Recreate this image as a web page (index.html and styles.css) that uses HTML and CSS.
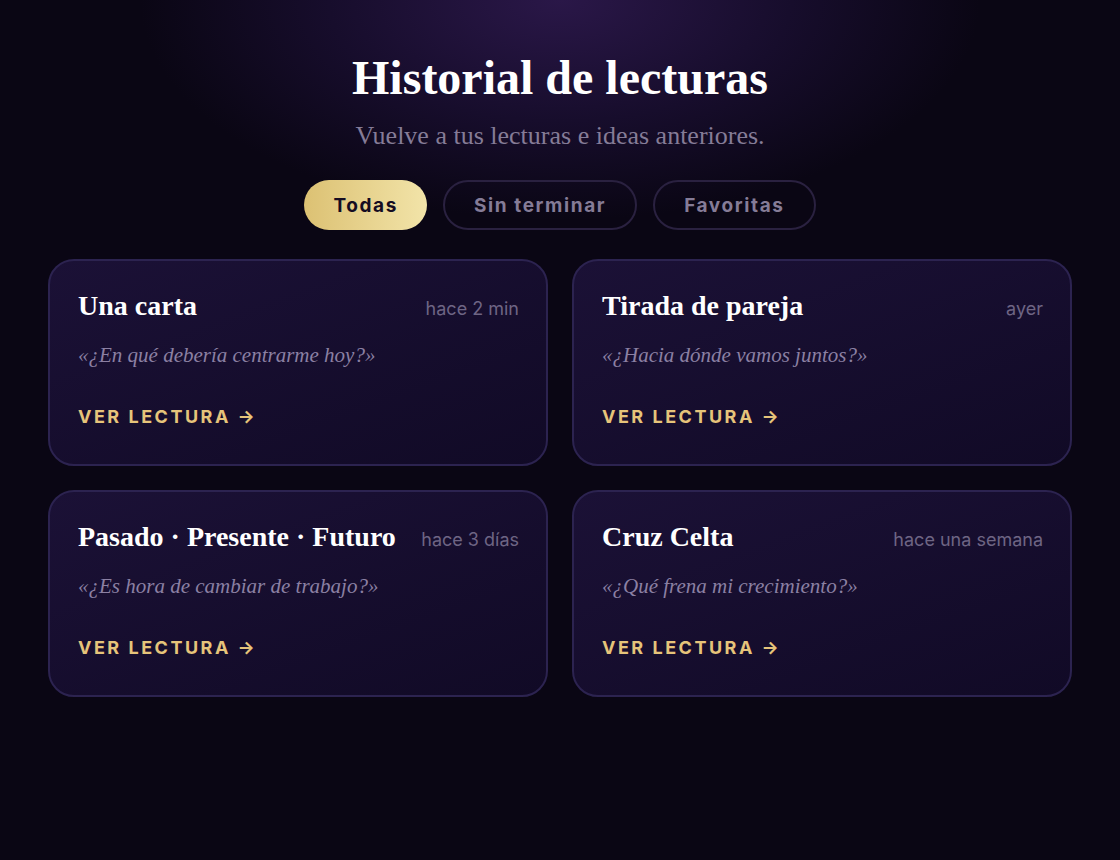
FILE: index.html
```html
<!DOCTYPE html>
<html lang="es">
<head>
    <meta charset="UTF-8">
    <title>Historial de lecturas</title>
    <link rel="stylesheet" href="styles.css">
</head>
<body>
    <main class="page">
        <header class="page-head">
            <h1>Historial de lecturas</h1>
            <p class="subtitle">Vuelve a tus lecturas e ideas anteriores.</p>
        </header>

        <nav class="filters">
            <div class="pill active">Todas</div>
            <div class="pill">Sin terminar</div>
            <div class="pill">Favoritas</div>
        </nav>

        <!-- lecturas -->
        <section class="grid">
            <article class="card">
                <div class="card-top">
                    <h2>Una carta</h2>
                    <span class="when">hace 2 min</span>
                </div>
                <p class="question">«¿En qué debería centrarme hoy?»</p>
                <a class="more" href="#">Ver lectura →</a>
            </article>
            <article class="card">
                <div class="card-top">
                    <h2>Tirada de pareja</h2>
                    <span class="when">ayer</span>
                </div>
                <p class="question">«¿Hacia dónde vamos juntos?»</p>
                <a class="more" href="#">Ver lectura →</a>
            </article>
            <article class="card">
                <div class="card-top">
                    <h2>Pasado · Presente · Futuro</h2>
                    <span class="when">hace 3 días</span>
                </div>
                <p class="question">«¿Es hora de cambiar de trabajo?»</p>
                <a class="more" href="#">Ver lectura →</a>
            </article>
            <article class="card">
                <div class="card-top">
                    <h2>Cruz Celta</h2>
                    <span class="when">hace una semana</span>
                </div>
                <p class="question">«¿Qué frena mi crecimiento?»</p>
                <a class="more" href="#">Ver lectura →</a>
            </article>
        </section>
    </main>
</body>
</html>
```

FILE: styles.css
```css
html, body {
    height: 100%;
}
body {
    margin: 0;
    padding: 0;
    font-family: 'Liberation Serif', serif;
    color: white;
    background-color: #0a0614;
    background-image: radial-gradient(ellipse 420px 220px at 560px 0, #2a1748 0%, #170d2c 55%, #0a0614 100%);
    background-repeat: no-repeat;
}
.page {
    width: 1024px;
    margin: 0 auto;
    padding-top: 50px;
}
.page-head {
    text-align: center;
}
h1 {
    margin: 0;
    font-size: 48px;
    font-weight: bold;
    line-height: 56px;
}
.subtitle {
    margin: 15px 0 0;
    font-size: 26px;
    line-height: 30px;
    color: #857c97;
}
.filters {
    display: flex;
    justify-content: center;
    gap: 16px;
    margin-top: 29px;
}
.pill {
    height: 50px;
    box-sizing: border-box;
    padding: 0 29px;
    display: flex;
    align-items: center;
    border: 2px solid #2a2140;
    border-radius: 25px;
    font-family: 'Inter', 'Liberation Sans', sans-serif;
    font-size: 19px;
    font-weight: 700;
    letter-spacing: 1.6px;
    color: #857c97;
}
.pill.active {
    border: none;
    padding: 0 29px;
    color: #150c22;
    background: linear-gradient(90deg, #dcc173, #f2e4a9);
}
.grid {
    display: grid;
    grid-template-columns: 1fr 1fr;
    gap: 24px;
    margin-top: 29px;
}
.card {
    height: 207px;
    box-sizing: border-box;
    padding: 28px 27px 0 28px;
    border: 2px solid #2c2350;
    border-radius: 26px;
    background: linear-gradient(160deg, #1b1136, #110a26);
}
.card-top {
    display: flex;
    justify-content: space-between;
    align-items: baseline;
}
h2 {
    margin: 0;
    font-size: 28px;
    font-weight: bold;
    line-height: 34px;
}
.when {
    font-family: 'Inter', 'Liberation Sans', sans-serif;
    font-size: 18px;
    color: #6e6584;
}
.question {
    margin: 19px 0 0;
    font-size: 21px;
    font-style: italic;
    line-height: 26px;
    color: #8b80a3;
}
.more {
    display: inline-block;
    margin-top: 38px;
    font-family: 'Inter', 'Liberation Sans', sans-serif;
    font-size: 18px;
    line-height: 22px;
    font-weight: 700;
    letter-spacing: 2.5px;
    text-transform: uppercase;
    text-decoration: none;
    color: #e6c47a;
}
```
